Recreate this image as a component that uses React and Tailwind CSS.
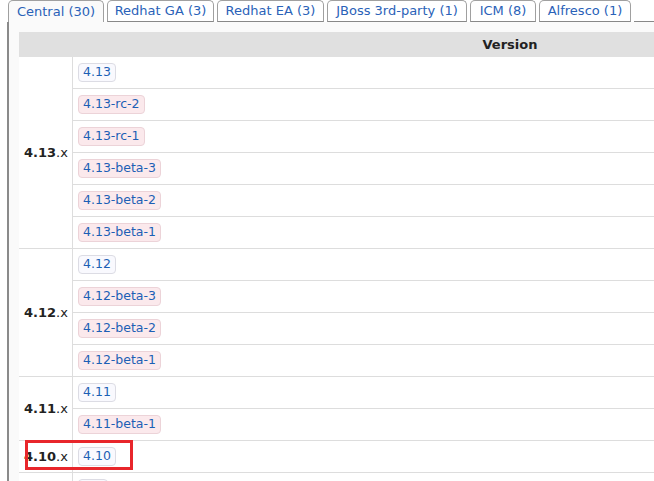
import React from 'react';

const tabs = [
  { label: 'Central (30)', w: 'w-[96px]', active: true },
  { label: 'Redhat GA (3)', w: 'w-[107px]' },
  { label: 'Redhat EA (3)', w: 'w-[107px]' },
  { label: 'JBoss 3rd-party (1)', w: 'w-[140px]' },
  { label: 'ICM (8)', w: 'w-[66px]' },
  { label: 'Alfresco (1)', w: 'w-[92px]' },
];

const groups = [
  { name: '4.13', versions: ['4.13', '4.13-rc-2', '4.13-rc-1', '4.13-beta-3', '4.13-beta-2', '4.13-beta-1'] },
  { name: '4.12', versions: ['4.12', '4.12-beta-3', '4.12-beta-2', '4.12-beta-1'] },
  { name: '4.11', versions: ['4.11', '4.11-beta-1'] },
  { name: '4.10', versions: ['4.10'] },
  { name: '4.9', versions: ['4.9'] },
];

const Badge = ({ v }) => {
  const pre = v.includes('-');
  return (
    <span
      className={
        'inline-flex items-center h-[19px] px-[4px] rounded-[4px] border text-[12.5px] text-[#1d5fb5] ' +
        (pre ? 'bg-[#fbe9ec] border-[#ecd3d8]' : 'bg-[#f9f9fe] border-[#dcdce4]')
      }
    >
      {v}
    </span>
  );
};

export default function App() {
  return (
    <div className="relative w-[654px] h-[481px] overflow-hidden bg-white font-['DejaVu_Sans',Verdana,sans-serif]">
      {/* tab strip */}
      <div className="flex items-end h-[22px] pl-[8px]">
        {tabs.map((t) => (
          <div
            key={t.label}
            className={
              'h-[22px] mr-[3px] shrink-0 whitespace-nowrap flex items-center justify-center border border-[#a0a0a0] rounded-t-[5px] text-[13px] text-[#2a62b8] ' +
              t.w +
              ' ' +
              (t.active ? 'border-b-0 bg-[#fafafa]' : 'border-b-[#888] bg-white')
            }
          >
            {t.label}
          </div>
        ))}
        <div className="flex-1 self-stretch border-b border-[#888]" />
      </div>

      {/* panel */}
      <div className="ml-[7px] border-l-2 border-[#8a8a8a] bg-[#fafafa] pl-[10px] pt-[10px] h-[460px]">
        <div className="w-[990px] bg-white">
          <div className="h-[25px] bg-[#e0e0e0] flex items-center justify-center w-[982px] text-[13px] font-bold text-[#222]">
            Version
          </div>
          {groups.map((g) => (
            <div key={g.name} className="flex border-b border-[#dddddd]">
              <div className="w-[54px] shrink-0 flex items-center pl-[5px] border-r border-[#dddddd] text-[13px] text-[#222]">
                <span className="font-bold">{g.name}</span>
                <span>.x</span>
              </div>
              <div className="flex-1 flex flex-col">
                {g.versions.map((v, i) => (
                  <div
                    key={v}
                    className={
                      'flex items-center pl-[5px] ' +
                      (i < g.versions.length - 1 ? 'h-[32px] border-b border-[#dddddd]' : 'h-[31px]')
                    }
                  >
                    <Badge v={v} />
                  </div>
                ))}
              </div>
            </div>
          ))}
        </div>
      </div>

      {/* annotation */}
      <div className="absolute left-[25px] top-[440px] w-[108px] h-[30px] border-[3px] border-[#e8262b]" />
    </div>
  );
}
